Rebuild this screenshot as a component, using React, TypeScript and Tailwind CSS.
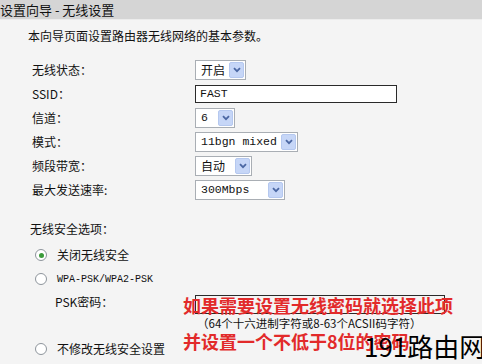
import React from "react";

const cjk = "font-['SimSun','Noto_Sans_CJK_SC',sans-serif]";
const mono = "font-['Liberation_Mono','Noto_Sans_CJK_SC',monospace]";

type SelectProps = { value: string; width: string; latin?: boolean };

const Select = ({ value, width, latin }: SelectProps) => (
  <div
    className={`${width} h-[20px] flex items-center justify-between bg-white border border-[#a9aeb4] pl-[5px] pr-[1px]`}
  >
    <span
      className={`${latin ? mono + " text-[11.5px]" : cjk + " text-[12px]"} text-[#111] leading-none whitespace-pre`}
    >
      {value}
    </span>
    <span className="w-[15px] h-[16px] flex items-center justify-center bg-[#c6d6f7] border border-[#b5c8ef] rounded-[2px]">
      <svg width="8" height="6" viewBox="0 0 8 6">
        <path d="M1 1.2 L4 4.2 L7 1.2" fill="none" stroke="#4b67a3" strokeWidth="1.8" />
      </svg>
    </span>
  </div>
);

const Radio = ({ checked }: { checked?: boolean }) => (
  <span className="w-[12px] h-[12px] rounded-full border border-[#8e959c] bg-white flex items-center justify-center">
    {checked && <span className="w-[5px] h-[5px] rounded-full bg-[#3a9a3a]" />}
  </span>
);

const Row = ({ label, children }: { label: string; children: React.ReactNode }) => (
  <div className="h-[24px] flex items-center">
    <div className={`w-[195px] shrink-0 pl-[32px] ${cjk} text-[12px] text-[#111]`}>{label}</div>
    {children}
  </div>
);

export default function App() {
  return (
    <div className="w-[482px] h-[364px] bg-[#f4f4f4] relative overflow-hidden">
      <div className="h-[20px] bg-[#d5d5d5] border-b border-[#ececec] flex items-center">
        <span className={`${cjk} text-[13px] text-[#111] leading-none`}>设置向导 - 无线设置</span>
      </div>

      <div className={`pl-[28px] pt-[7px] h-[38px] ${cjk} text-[12px] leading-[18px] text-[#111]`}>
        本向导页面设置路由器无线网络的基本参数。
      </div>

      <Row label="无线状态：">
        <Select value="开启" width="w-[51px]" />
      </Row>
      <Row label="SSID：">
        <div className="w-[202px] h-[18px] bg-white border border-[#2a2a2a] flex items-center pl-[4px]">
          <span className={`${mono} text-[11.5px] text-[#111] leading-none`}>FAST</span>
        </div>
      </Row>
      <Row label="信道：">
        <Select value="6" width="w-[40px]" latin />
      </Row>
      <Row label="模式：">
        <Select value="11bgn mixed" width="w-[103px]" latin />
      </Row>
      <Row label="频段带宽：">
        <Select value="自动" width="w-[57px]" />
      </Row>
      <Row label="最大发送速率:">
        <Select value="300Mbps" width="w-[90px]" latin />
      </Row>

      <div className={`pl-[30px] h-[35px] flex items-end ${cjk} text-[12px] text-[#111]`}>
        <span className="leading-[16px]">无线安全选项：</span>
      </div>

      <div className="h-[6px]" />
      <div className="h-[24px] flex items-center pl-[35px] gap-[10px]">
        <Radio checked />
        <span className={`${cjk} text-[12px] text-[#111]`}>关闭无线安全</span>
      </div>
      <div className="h-[24px] flex items-center pl-[35px] gap-[10px]">
        <Radio />
        <span className={`${mono} text-[10px] text-[#111]`}>WPA-PSK/WPA2-PSK</span>
      </div>
      <div className="h-[22px] flex items-center">
        <div className={`w-[195px] shrink-0 pl-[55px] ${cjk} text-[12px] text-[#111]`}>PSK密码：</div>
        <div className="w-[250px] h-[19px] border border-[#2a2a2a] mt-[4px]" />
      </div>
      <div className="h-[24px]" />
      <div className="h-[24px] flex items-center pl-[35px] gap-[10px]">
        <Radio />
        <span className={`${cjk} text-[12px] text-[#111]`}>不修改无线安全设置</span>
      </div>

      <div className="absolute left-[183px] top-[294px] flex flex-col">
        <span className={`${cjk} text-[18px] font-bold text-[#e22a2a] leading-[22px] whitespace-nowrap`}>
          如果需要设置无线密码就选择此项
        </span>
        <span className={`${cjk} text-[11.5px] text-[#111] leading-[14px] pl-[14px] whitespace-nowrap`}>
          （64个十六进制字符或8-63个ACSII码字符）
        </span>
        <span className={`${cjk} text-[18px] font-bold text-[#e22a2a] leading-[22px] whitespace-nowrap`}>
          并设置一个不低于8位的密码
        </span>
      </div>

      <div className="absolute left-[364px] top-[330px]">
        <span className="font-['Noto_Sans_CJK_SC',sans-serif] text-[26px] text-black leading-[32px] whitespace-nowrap">
          191路由网
        </span>
      </div>
    </div>
  );
}
